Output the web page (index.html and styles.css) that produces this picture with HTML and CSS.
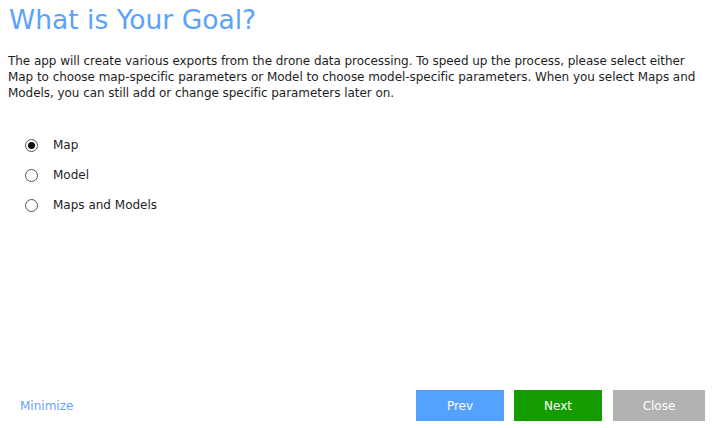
FILE: index.html
```html
<!DOCTYPE html>
<html lang="en">
<head>
	<meta charset="UTF-8">
	<title>What is Your Goal?</title>
	<link rel="stylesheet" href="styles.css">
</head>
<body>
	<div class="wizard">
		<div class="content">
			<h1 class="title">What is Your Goal?</h1>
			<p class="intro">The app will create various exports from the drone data processing. To speed up the process, please select either Map to choose map-specific parameters or Model to choose model-specific parameters. When you select Maps and Models, you can still add or change specific parameters later on.</p>
			<ul class="options">
				<li><label><input type="radio" name="goal" checked><span>Map</span></label></li>
				<li><label><input type="radio" name="goal"><span>Model</span></label></li>
				<li><label><input type="radio" name="goal"><span>Maps and Models</span></label></li>
			</ul>
		</div>
		<div class="footer">
			<a class="minimize" href="#">Minimize</a>
			<div class="buttons">
				<button class="btn prev">Prev</button>
				<button class="btn next">Next</button>
				<button class="btn close">Close</button>
			</div>
		</div>
	</div>
</body>
</html>
```

FILE: styles.css
```css
*{
	margin: 0px;
	padding: 0px;
	box-sizing: border-box;
}
html,body{
	height: 100%;
}
body{
	font-family: "DejaVu Sans", Verdana, sans-serif;
	font-size: 12px;
	color: #1e1e1e;
	background: #fff;
}
li{
	list-style: none;
}
.wizard{
	height: 100%;
	display: flex;
	flex-direction: column;
	justify-content: space-between;
	padding: 0 10px 7px 8px;
}
.title{
	font-weight: normal;
	font-size: 26.5px;
	line-height: 40px;
	color: #5aa2ff;
	padding-left: 1px;
}
.intro{
	margin-top: 13px;
	line-height: 16px;
	letter-spacing: -0.05px;
}
.options{
	margin-top: 29px;
	padding-left: 17px;
}
.options li{
	height: 30px;
	display: flex;
	align-items: center;
}
.options label{
	display: flex;
	align-items: center;
	line-height: 16px;
	cursor: pointer;
}
.options input{
	appearance: none;
	-webkit-appearance: none;
	width: 13px;
	height: 13px;
	margin: 0 15px 0 0;
	border: 1px solid #555;
	border-radius: 50%;
	background: #fff;
	display: flex;
	align-items: center;
	justify-content: center;
}
.options input:checked::after{
	content: "";
	width: 7px;
	height: 7px;
	border-radius: 50%;
	background: #111;
}
.footer{
	display: flex;
	align-items: center;
	justify-content: space-between;
}
.minimize{
	color: #6a9fff;
	text-decoration: none;
	padding-left: 12px;
}
.buttons{
	display: flex;
	gap: 10px;
}
.btn{
	border: none;
	height: 31px;
	width: 88px;
	color: #fff;
	font-family: inherit;
	font-size: 12px;
	cursor: pointer;
}
.prev{
	background: #55a1ff;
}
.next{
	background: #149c00;
}
.close{
	background: #b2b2b2;
	width: 92px;
	margin-left: 1px;
}
```
